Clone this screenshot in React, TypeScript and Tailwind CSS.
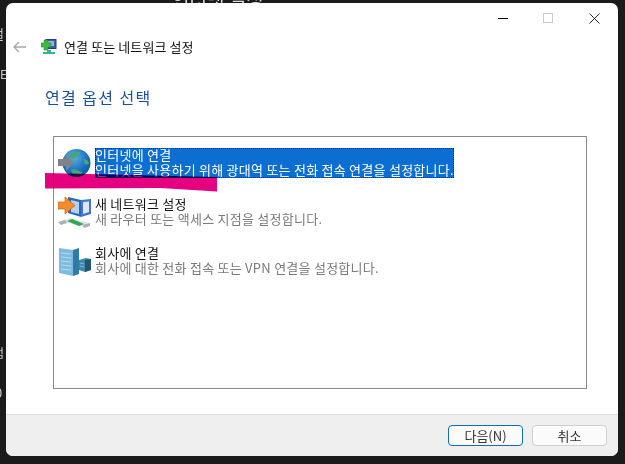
const font = { fontFamily: '"Noto Sans CJK KR", "Noto Sans", sans-serif' };

function Globe() {
  return (
    <svg width="34" height="30" viewBox="0 0 34 30">
      <defs>
        <radialGradient id="g1" cx="0.4" cy="0.3" r="0.8">
          <stop offset="0" stopColor="#5fb0ea" />
          <stop offset="0.6" stopColor="#1b72bd" />
          <stop offset="1" stopColor="#0c4f8c" />
        </radialGradient>
      </defs>
      <circle cx="18.500" cy="15" r="14" fill="url(#g1)" />
      <path d="M12 7c3-3 7-4 10-3 1 2-2 3-3 5-2 0-2 3-4 2-1-1-4-2-3-4zM13 22c4-2 7 1 11 2 1 1-3 4-6 4-2-1-5-4-5-6zM26 11c2 0 4 1 5 4-1 3-4 1-5 0z" fill="#46a57a" />
      <path d="M0 11h8V6l8 8.500L8 23v-5H0z" fill="#80848a" />
    </svg>
  );
}

function Net() {
  return (
    <svg width="34" height="34" viewBox="0 0 34 34">
      <path d="M10 2l13 3v17L10 18z" fill="#2b66bb" />
      <path d="M13 5l8 2v12l-8-2z" fill="#b9cff0" />
      <path d="M23 5l10-1v15l-10 3z" fill="#3f78c8" />
      <path d="M25 7l6-.600v10.600l-6 2z" fill="#dce8f8" />
      <path d="M0 7h7V2l10 8.500L7 19v-5H0z" fill="#f28c2e" stroke="#c8641a" strokeWidth="0.700" />
      <path d="M3 26l9-3 20 5-6 4z" fill="#dfe3e6" />
      <path d="M9 26l5-2 12 5-5 2z" fill="#2fa84f" />
      <path d="M0 27l7-2 2 3-6 2zM25 30l7-2 0 3-6 2z" fill="#aab0b6" />
    </svg>
  );
}

function Corp() {
  return (
    <svg width="34" height="30" viewBox="0 0 34 30">
      <path d="M1 2l14 2v26L1 27z" fill="#7fbbde" />
      <path d="M15 4l6-2v26l-6 2z" fill="#2c7ba9" />
      <path d="M3 7l10 1M3 11l10 1M3 15l10 1M3 19l10 1M3 23l10 1" stroke="#b5dcf0" strokeWidth="1" />
      <path d="M21 14l7-2 5 1v11l-6 2-6-2z" fill="#3f86a8" />
      <path d="M27 14l6-1v11l-6 2z" fill="#1f5774" />
      <path d="M22 17l4 1M22 20l4 1" stroke="#86bfd9" strokeWidth="1" />
    </svg>
  );
}

function Option({ icon, title, desc, selected }: { icon: React.ReactNode; title: string; desc: string; selected?: boolean }) {
  return (
    <div className="flex items-center h-[49px]">
      <div className="w-[37px] ml-[4px] shrink-0 flex justify-start">{icon}</div>
      <div className={selected ? "h-[30px] bg-[#0a6fd0] outline-1 outline-dotted outline-[#10305a] -outline-offset-1 w-[359px]" : "h-[30px]"}>
        <div className={`-mt-[1px] text-[13px] leading-[15px] tracking-[0.25px] whitespace-nowrap ${selected ? "text-white" : "text-[#111111]"}`}>{title}</div>
        <div className={`text-[13px] leading-[15px] tracking-[0.25px] whitespace-nowrap ${selected ? "text-white" : "text-[#7a7a7a]"}`}>{desc}</div>
      </div>
    </div>
  );
}

export default function App() {
  return (
    <div className="relative w-[625px] h-[464px] overflow-hidden bg-[#1b1b1b] pt-[3px] pl-[6px] pr-[7px] pb-[8px]" style={font}>
      <span className="absolute left-[172px] top-[-13px] text-[19px] leading-[24px] text-[#dddddd] whitespace-nowrap">인터넷 설정</span>
      <span className="absolute left-[-8px] top-[26px] text-[13px] leading-[16px] text-[#cccccc]">설</span>
      <span className="absolute left-[0px] top-[66px] text-[12px] leading-[16px] text-[#cccccc]">E</span>
      <span className="absolute left-[-7px] top-[345px] text-[12px] leading-[16px] text-[#cccccc]">럼</span>
      <span className="absolute left-[-5px] top-[385px] text-[13px] leading-[16px] text-[#cccccc]">0</span>

      <div className="relative flex flex-col h-full bg-white rounded-[7px] overflow-hidden">
        <div className="flex justify-end items-center h-[30px] shrink-0">
          <div className="w-[10px] h-[1px] bg-black mr-[35px]" />
          <div className="w-[10px] h-[10px] border border-[#cccccc] mr-[36px]" />
          <svg width="11" height="11" viewBox="0 0 11 11" className="mr-[18px]">
            <path d="M0.500 0.500l10 10M10.500 0.500l-10 10" stroke="#222222" strokeWidth="1" />
          </svg>
        </div>

        <div className="flex items-center h-[28px] shrink-0 pl-[7px]">
          <svg width="14" height="12" viewBox="0 0 14 12" className="shrink-0">
            <path d="M13 6H1M6 1L1 6l5 5" fill="none" stroke="#a8a8a8" strokeWidth="1.400" />
          </svg>
          <svg width="16" height="16" viewBox="0 0 16 16" className="ml-[14px] shrink-0">
            <rect x="5" y="0.500" width="10" height="9" fill="#3b5fa8" stroke="#23407a" />
            <rect x="7" y="2" width="6" height="5" fill="#8fb2e0" />
            <path d="M3 1h4v3h3v4H7v3H3V8H0V4h3z" fill="#3fb83f" stroke="#1f7f1f" strokeWidth="0.500" />
            <path d="M6 11h4v2h4v2H2v-2h4z" fill="#38b58a" />
          </svg>
          <span className="ml-[7px] text-[13px] leading-[18px] tracking-[0.1px] text-[#111111] whitespace-nowrap">연결 또는 네트워크 설정</span>
        </div>

        <div className="ml-[39px] mt-[25px] text-[16px] leading-[22px] tracking-[1.4px] text-[#1e4f96] shrink-0 whitespace-nowrap">연결 옵션 선택</div>

        <div className="mx-[47px] mt-[28px] w-[534px] h-[253px] border border-[#8a8a8a] shrink-0 pt-[1px]">
          <Option selected icon={<Globe />} title="인터넷에 연결" desc="인터넷을 사용하기 위해 광대역 또는 전화 접속 연결을 설정합니다." />
          <Option icon={<Net />} title="새 네트워크 설정" desc="새 라우터 또는 액세스 지점을 설정합니다." />
          <Option icon={<Corp />} title="회사에 연결" desc="회사에 대한 전화 접속 또는 VPN 연결을 설정합니다." />
        </div>

        <div className="mt-auto h-[42px] bg-[#efefef] border-t border-[#dfdfdf] flex items-center justify-end gap-[9px] pr-[11px] shrink-0">
          <button className="w-[75px] h-[21px] rounded-[4px] bg-[#fbfbfb] border border-[#0f6cbd] text-[13px] leading-none text-[#333333]">다음(N)</button>
          <button className="w-[75px] h-[21px] rounded-[4px] bg-[#fbfbfb] border border-[#d0d0d0] text-[13px] leading-none text-[#333333]">취소</button>
        </div>
      </div>

      <svg width="175" height="20" viewBox="0 0 175 20" className="absolute left-[45px] top-[172px] mix-blend-multiply">
        <path d="M0 1L172 5L172 19.500L115 16L0 16.500z" fill="#e5007f" />
      </svg>
    </div>
  );
}
